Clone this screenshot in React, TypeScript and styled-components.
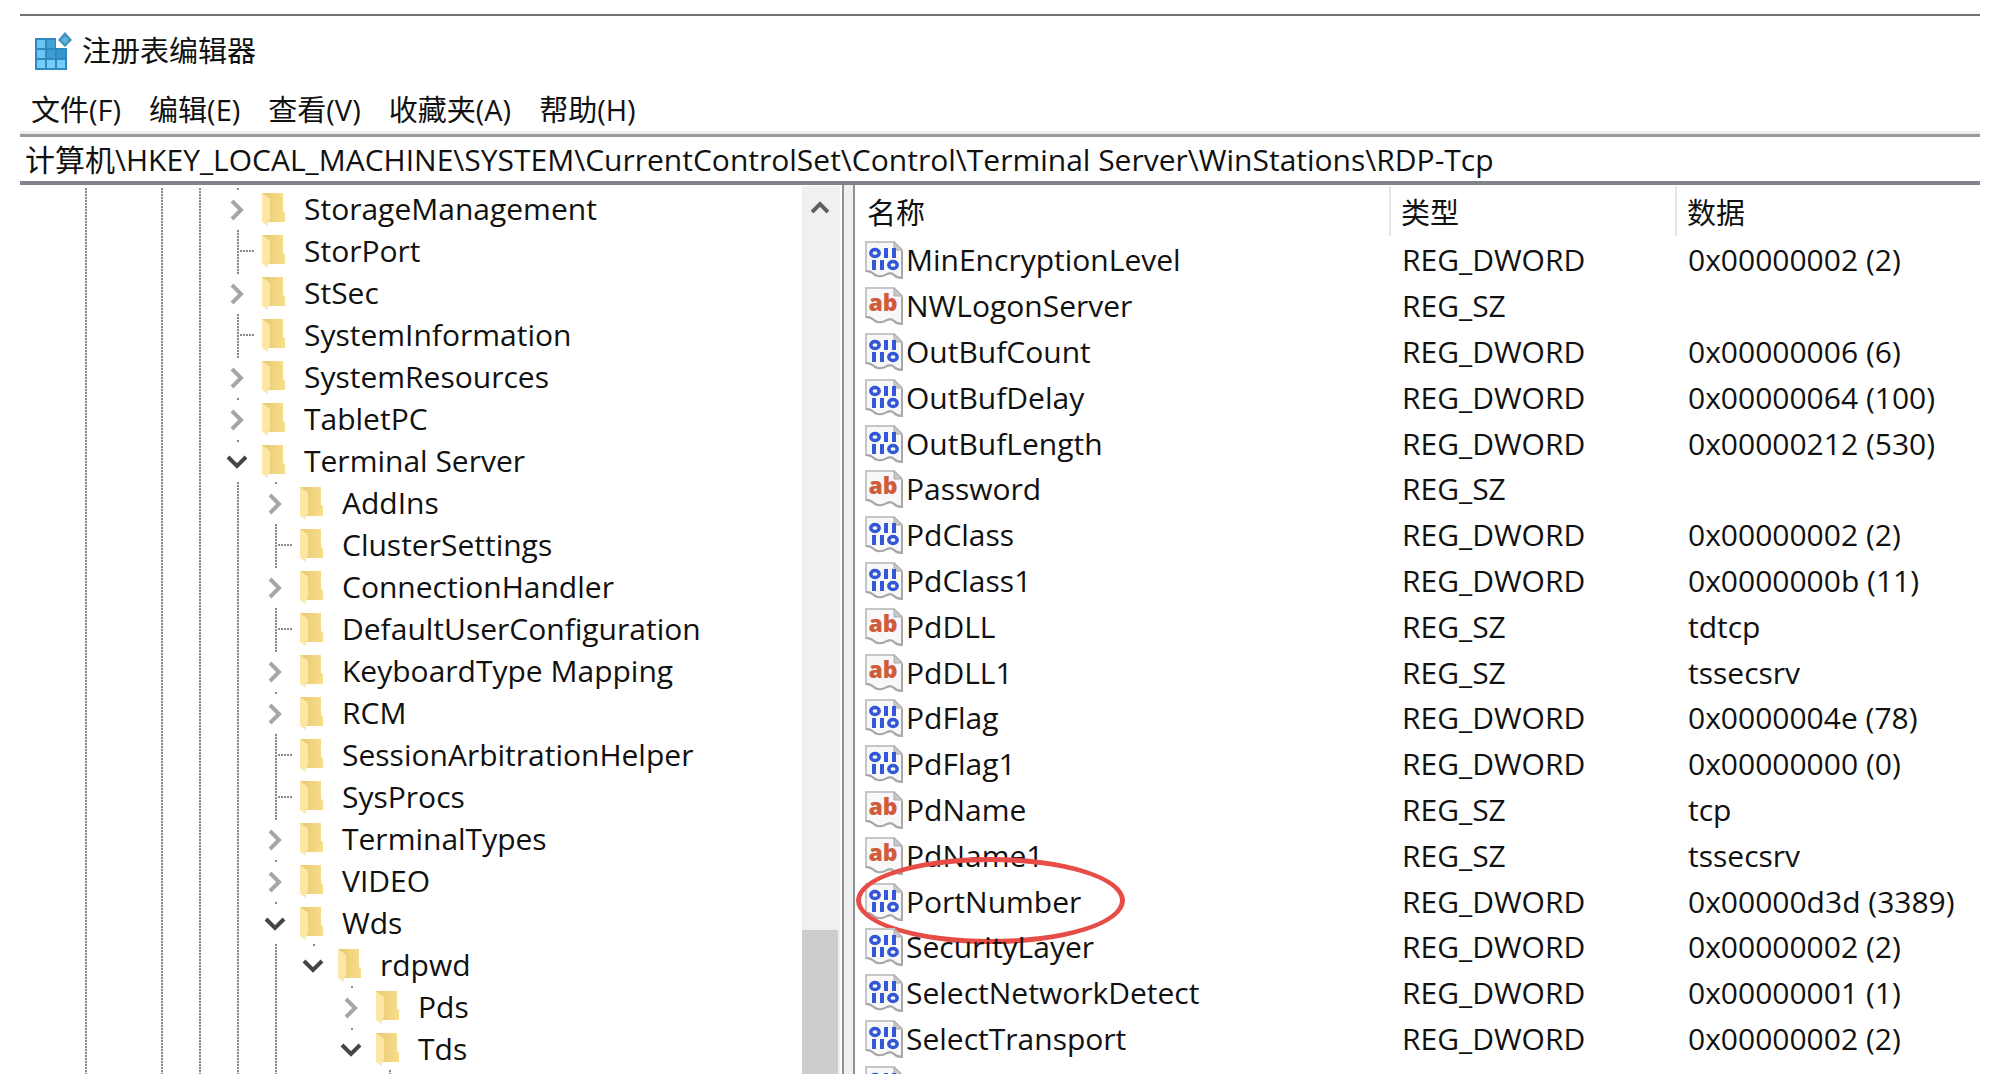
import React from 'react';
import styled, { createGlobalStyle, css } from 'styled-components';

const GlobalStyle = createGlobalStyle`
  *, *::before, *::after { box-sizing: border-box; }
  html, body { margin: 0; padding: 0; background: #fff; }
  body { overflow: hidden; }
  button, input, table { font: inherit; color: inherit; }
`;

const INDENT = 38;

const Window = styled.div`
  height: 100vh;
  padding: 14px 30px 0 20px;
  display: flex;
  flex-direction: column;
  overflow: hidden;
  color: #111;
  font-family: 'Open Sans', 'Noto Sans CJK SC', sans-serif;
  font-size: 30px;
  line-height: 42px;
`;

const TitleBar = styled.header`
  display: flex;
  align-items: center;
  gap: 10px;
  height: 73px;
  padding: 0 0 2px 14px;
  border-top: 2px solid #737373;
`;

const Title = styled.h1`
  margin: 0;
  font-size: 29px;
  font-weight: 400;
`;

const MenuBar = styled.nav`
  display: flex;
  align-items: center;
  gap: 28px;
  height: 47px;
  padding: 2px 0 0 11px;
  border-bottom: 3px solid #ededed;
`;

const MenuButton = styled.button`
  padding: 0;
  border: 0;
  background: none;
  font-size: 29px;
  white-space: nowrap;
`;

const AddressBar = styled.div`
  display: flex;
  height: 51px;
  border-top: 3px solid #9a9a9a;
  border-bottom: 4px solid #80848a;
`;

const AddressInput = styled.input`
  flex: 1;
  min-width: 0;
  padding: 1px 5px 0;
  border: 0;
  outline: 0;
  background: none;
`;

const Panes = styled.main`
  flex: 1;
  min-height: 0;
  display: flex;
`;

const TreePane = styled.div`
  width: 824px;
  flex: none;
  display: flex;
  border-right: 2px solid #8d9299;
`;

const Tree = styled.ul`
  flex: 1;
  min-width: 0;
  margin: 0;
  padding: 3px 0 0 47px;
  list-style: none;
  overflow: hidden;
`;

const TreeRow = styled.li`
  display: flex;
  height: 42px;
`;

const Guide = styled.span<{ $kind: 'line' | 'blank' | 'leaf' | 'node' }>`
  flex: none;
  width: ${INDENT}px;
  display: flex;
  align-items: center;
  background-repeat: no-repeat;
  background-position: 18px 0;
  ${({ $kind }) =>
    ($kind === 'line' || $kind === 'leaf') &&
    css`
      background-image: repeating-linear-gradient(to bottom, #8a8a8a 0 2px, #ededed 2px 3px);
      background-size: 2px 100%;
    `}
  ${({ $kind }) =>
    $kind === 'node' &&
    css`
      background-image: linear-gradient(#8a8a8a, #8a8a8a);
      background-size: 2px 2px;
    `}
  ${({ $kind }) =>
    $kind === 'leaf' &&
    css`
      &::after {
        content: '';
        width: 15px;
        height: 2px;
        margin-left: 21px;
        background: repeating-linear-gradient(to right, #8a8a8a 0 2px, transparent 2px 3px);
      }
    `}
`;

const Expander = styled.button`
  display: flex;
  align-items: center;
  justify-content: center;
  width: 36px;
  padding: 2px 0 0;
  border: 0;
  background: none;
`;

const Folder = styled.span`
  flex: none;
  display: flex;
  align-items: center;
  width: 47px;
  padding-left: 5px;
`;

const KeyName = styled.span`
  white-space: nowrap;
`;

const ScrollBar = styled.div`
  flex: none;
  width: 40px;
  display: flex;
  flex-direction: column;
  border-right: 2px solid #fff;
  border-top: 1px solid #fff;
  background: #f0f0f0;
`;

const ScrollButton = styled.button`
  display: flex;
  align-items: center;
  justify-content: center;
  height: 42px;
  padding: 0 2px 0 0;
  border: 0;
  background: none;
`;

const ScrollTrack = styled.div`
  flex: 1;
  display: flex;
  flex-direction: column;
  justify-content: flex-end;
`;

const ScrollThumb = styled.div`
  height: 17%;
  margin-right: 2px;
  background: #cdcdcd;
`;

const Splitter = styled.div`
  flex: none;
  width: 9px;
  background: #f0f0f0;
`;

const ListPane = styled.div`
  flex: 1;
  min-width: 0;
  border-left: 2px solid #8d9299;
  overflow: hidden;
`;

const ValueTable = styled.table`
  width: 100%;
  border-collapse: collapse;
  table-layout: fixed;
`;

const HeadCell = styled.th<{ $width: string; $divider?: boolean }>`
  width: ${({ $width }) => $width};
  height: 52px;
  padding: 4px 0 0 12px;
  font-size: 29px;
  font-weight: 400;
  text-align: left;
  background: ${({ $divider }) =>
    $divider ? 'linear-gradient(#e6e6e6, #e6e6e6) no-repeat 0 1px / 2px 50px' : 'none'};
`;

const ValueRow = styled.tr`
  height: 46px;
  &:nth-child(5n) { height: 45px; }
`;

const Cell = styled.td`
  padding: 0 0 0 13px;
  white-space: nowrap;
`;

const NameCell = styled(Cell)`
  padding-left: 10px;
`;

const NameBox = styled.div`
  position: relative;
  display: flex;
  align-items: center;
  gap: 3px;
  height: 42px;
`;

const Highlight = styled.span`
  position: absolute;
  left: -9px;
  top: -24px;
  width: 269px;
  height: 87px;
  border: 5px solid #e84c46;
  border-radius: 50%;
  pointer-events: none;
`;

const appTiles: Array<[number, number, string]> = [
  [3, 8, '#6cc4f2'], [13, 8, '#43a3d6'],
  [3, 18, '#6cc4f2'], [13, 18, '#3d9dd2'], [23, 18, '#3896cb'],
  [3, 28, '#74cdf8'], [13, 28, '#74cdf8'], [23, 28, '#74cdf8'],
];

const AppIcon = () => (
  <svg width="38" height="38" viewBox="0 0 38 38" aria-hidden="true">
    <path d="M1 6H22V16H33V38H1Z" fill="#2f88c0" />
    {appTiles.map(([x, y, fill]) => (
      <rect key={`${x}-${y}`} x={x} y={y} width="8" height="8" fill={fill} />
    ))}
    <path d="M31 0L38 8L31 15L24 8Z" fill="#3f92bd" />
    <path d="M31 4L35 8L31 12L27 8Z" fill="#5fb4dc" />
  </svg>
);

const FolderIcon = () => (
  <svg width="23" height="33" viewBox="0 0 23 33" aria-hidden="true">
    <defs>
      <linearGradient id="folderBack" x1="0" y1="0" x2="1" y2="0">
        <stop offset="0.2" stopColor="#ebcc78" />
        <stop offset="1" stopColor="#f8de8b" />
      </linearGradient>
    </defs>
    <path d="M0 0H21V18L23 19V29H0Z" fill="url(#folderBack)" />
    <path d="M0 0L7 5Q8 6 8 8V26Q8 28 6 29V33L0 29Z" fill="#fde7a6" />
  </svg>
);

const ChevronRight = () => (
  <svg width="14" height="22" viewBox="0 0 14 22" aria-hidden="true">
    <path d="M2 2L11 11L2 20" fill="none" stroke="#a6a6a6" strokeWidth="4" />
  </svg>
);

const ChevronDown = () => (
  <svg width="22" height="14" viewBox="0 0 22 14" aria-hidden="true">
    <path d="M2 2L11 11L20 2" fill="none" stroke="#454545" strokeWidth="4" />
  </svg>
);

const ChevronUp = () => (
  <svg width="18" height="14" viewBox="0 0 18 14" aria-hidden="true">
    <path d="M1 12L9 4L17 12" fill="none" stroke="#606060" strokeWidth="4" />
  </svg>
);

const Paper = ({ children }: { children: React.ReactNode }) => (
  <svg width="38" height="38" viewBox="0 0 38 38" aria-hidden="true">
    <path d="M1 1H29L37 9V37Q32 37 29 34Q26 31 22 33Q16 37 10 34Q6 30 1 30Z" fill="#f8f8f8" stroke="#c6c6c6" strokeWidth="2" />
    <path d="M29 1V9H37Z" fill="#c9c9c9" stroke="#a9a9a9" />
    <path d="M1 30Q6 30 10 34Q16 37 22 33Q26 31 29 34Q32 37 37 37V10" fill="none" stroke="#a8a8a8" strokeWidth="2" />
    {children}
  </svg>
);

const BinaryIcon = () => (
  <Paper>
    <g fill="none" stroke="#3457d5" strokeWidth="3.5">
      <ellipse cx="10" cy="12" rx="4.2" ry="3.6" />
      <ellipse cx="28" cy="24" rx="4.2" ry="3.6" />
    </g>
    <g fill="#3457d5">
      <rect x="19" y="7" width="4" height="10" />
      <rect x="27" y="7" width="4" height="10" />
      <rect x="7" y="19" width="4" height="10" />
      <rect x="15" y="19" width="4" height="10" />
    </g>
  </Paper>
);

const StringIcon = () => (
  <Paper>
    <text x="18" y="24" textAnchor="middle" fontFamily="Open Sans" fontWeight="800" fontSize="23" fill="#cf5b3c">
      ab
    </text>
  </Paper>
);

type State = 'closed' | 'open' | 'leaf';

interface KeyNode {
  name: string;
  level: number;
  state: State;
}

const keys: KeyNode[] = [
  { name: 'StorageManagement', level: 0, state: 'closed' },
  { name: 'StorPort', level: 0, state: 'leaf' },
  { name: 'StSec', level: 0, state: 'closed' },
  { name: 'SystemInformation', level: 0, state: 'leaf' },
  { name: 'SystemResources', level: 0, state: 'closed' },
  { name: 'TabletPC', level: 0, state: 'closed' },
  { name: 'Terminal Server', level: 0, state: 'open' },
  { name: 'AddIns', level: 1, state: 'closed' },
  { name: 'ClusterSettings', level: 1, state: 'leaf' },
  { name: 'ConnectionHandler', level: 1, state: 'closed' },
  { name: 'DefaultUserConfiguration', level: 1, state: 'leaf' },
  { name: 'KeyboardType Mapping', level: 1, state: 'closed' },
  { name: 'RCM', level: 1, state: 'closed' },
  { name: 'SessionArbitrationHelper', level: 1, state: 'leaf' },
  { name: 'SysProcs', level: 1, state: 'leaf' },
  { name: 'TerminalTypes', level: 1, state: 'closed' },
  { name: 'VIDEO', level: 1, state: 'closed' },
  { name: 'Wds', level: 1, state: 'open' },
  { name: 'rdpwd', level: 2, state: 'open' },
  { name: 'Pds', level: 3, state: 'closed' },
  { name: 'Tds', level: 3, state: 'open' },
  { name: '', level: 4, state: 'leaf' },
];

// Guide columns left of a key: the ancestors that still have siblings below draw a line.
const rootGuides: Array<'line' | 'blank'> = ['line', 'blank', 'line', 'line'];
const levelGuides: Array<'line' | 'blank'> = ['line', 'line', 'blank', 'blank'];

const values: Array<[string, 'REG_DWORD' | 'REG_SZ', string]> = [
  ['MinEncryptionLevel', 'REG_DWORD', '0x00000002 (2)'],
  ['NWLogonServer', 'REG_SZ', ''],
  ['OutBufCount', 'REG_DWORD', '0x00000006 (6)'],
  ['OutBufDelay', 'REG_DWORD', '0x00000064 (100)'],
  ['OutBufLength', 'REG_DWORD', '0x00000212 (530)'],
  ['Password', 'REG_SZ', ''],
  ['PdClass', 'REG_DWORD', '0x00000002 (2)'],
  ['PdClass1', 'REG_DWORD', '0x0000000b (11)'],
  ['PdDLL', 'REG_SZ', 'tdtcp'],
  ['PdDLL1', 'REG_SZ', 'tssecsrv'],
  ['PdFlag', 'REG_DWORD', '0x0000004e (78)'],
  ['PdFlag1', 'REG_DWORD', '0x00000000 (0)'],
  ['PdName', 'REG_SZ', 'tcp'],
  ['PdName1', 'REG_SZ', 'tssecsrv'],
  ['PortNumber', 'REG_DWORD', '0x00000d3d (3389)'],
  ['SecurityLayer', 'REG_DWORD', '0x00000002 (2)'],
  ['SelectNetworkDetect', 'REG_DWORD', '0x00000001 (1)'],
  ['SelectTransport', 'REG_DWORD', '0x00000002 (2)'],
  ['Shadow', 'REG_DWORD', '0x00000001 (1)'],
];

const menus = ['文件(F)', '编辑(E)', '查看(V)', '收藏夹(A)', '帮助(H)'];

const KeyRow = ({ name, level, state }: KeyNode) => (
  <TreeRow>
    {[...rootGuides, ...levelGuides.slice(0, level)].map((kind, i) => (
      <Guide key={i} $kind={kind} />
    ))}
    <Guide $kind={state === 'leaf' ? 'leaf' : 'node'}>
      {state !== 'leaf' && (
        <Expander type="button" aria-expanded={state === 'open'} aria-label={name}>
          {state === 'open' ? <ChevronDown /> : <ChevronRight />}
        </Expander>
      )}
    </Guide>
    <Folder>
      <FolderIcon />
    </Folder>
    <KeyName>{name}</KeyName>
  </TreeRow>
);

export default function App() {
  return (
    <>
      <GlobalStyle />
      <Window>
        <TitleBar>
          <AppIcon />
          <Title>注册表编辑器</Title>
        </TitleBar>
        <MenuBar>
          {menus.map((label) => (
            <MenuButton key={label} type="button">
              {label}
            </MenuButton>
          ))}
        </MenuBar>
        <AddressBar>
          <AddressInput
            aria-label="计算机"
            defaultValue="计算机\HKEY_LOCAL_MACHINE\SYSTEM\CurrentControlSet\Control\Terminal Server\WinStations\RDP-Tcp"
          />
        </AddressBar>
        <Panes>
          <TreePane>
            <Tree>
              {keys.map((node, i) => (
                <KeyRow key={i} {...node} />
              ))}
            </Tree>
            <ScrollBar>
              <ScrollButton type="button" aria-label="▲">
                <ChevronUp />
              </ScrollButton>
              <ScrollTrack>
                <ScrollThumb />
              </ScrollTrack>
            </ScrollBar>
          </TreePane>
          <Splitter />
          <ListPane>
            <ValueTable>
              <thead>
                <tr>
                  <HeadCell $width="534px" scope="col">名称</HeadCell>
                  <HeadCell $width="286px" $divider scope="col">类型</HeadCell>
                  <HeadCell $width="auto" $divider scope="col">数据</HeadCell>
                </tr>
              </thead>
              <tbody>
                {values.map(([name, type, data]) => (
                  <ValueRow key={name}>
                    <NameCell>
                      <NameBox>
                        {type === 'REG_SZ' ? <StringIcon /> : <BinaryIcon />}
                        {name}
                        {name === 'PortNumber' && <Highlight />}
                      </NameBox>
                    </NameCell>
                    <Cell>{type}</Cell>
                    <Cell>{data}</Cell>
                  </ValueRow>
                ))}
              </tbody>
            </ValueTable>
          </ListPane>
        </Panes>
      </Window>
    </>
  );
}
